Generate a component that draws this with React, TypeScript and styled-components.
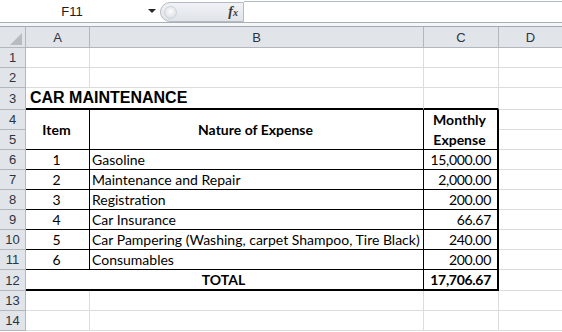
import React from 'react';
import styled, { createGlobalStyle } from 'styled-components';

const GlobalStyle = createGlobalStyle`
  html, body {
    margin: 0;
    padding: 0;
    background: #fff;
    overflow: hidden;
  }
  body {
    font-family: Lato, "Liberation Sans", sans-serif;
  }
`;

const EXPENSES = [
  { item: '1', name: 'Gasoline', amount: '15,000.00' },
  { item: '2', name: 'Maintenance and Repair', amount: '2,000.00' },
  { item: '3', name: 'Registration', amount: '200.00' },
  { item: '4', name: 'Car Insurance', amount: '66.67' },
  { item: '5', name: 'Car Pampering (Washing, carpet Shampoo, Tire Black)', amount: '240.00' },
  { item: '6', name: 'Consumables', amount: '200.00' },
];

const COLUMNS = ['A', 'B', 'C', 'D'];
const LAST_ROW = 14;

// --- formula bar ---
const FormulaBar = styled.div`
  display: flex;
  height: 23px;
  box-sizing: border-box;
  border-bottom: 1px solid #a9afb7;
  background: #fff;
`;

const NameBox = styled.div`
  width: 160px;
  display: flex;
  align-items: center;
`;

const NameText = styled.span`
  width: 144px;
  text-align: center;
  font-family: "Liberation Sans", sans-serif;
  font-size: 13px;
  color: #1c1c1c;
`;

const DropArrow = styled.span`
  width: 0;
  height: 0;
  margin-left: 4px;
  border-left: 4px solid transparent;
  border-right: 4px solid transparent;
  border-top: 4px solid #262626;
`;

const FxBox = styled.div`
  width: 84px;
  height: 20px;
  margin-top: 2px;
  box-sizing: border-box;
  display: flex;
  align-items: center;
  justify-content: space-between;
  padding: 0 5px 0 3px;
  background: linear-gradient(#f0f2f5, #e0e4e9);
  border: 1px solid #b4bac2;
  border-radius: 10px 0 0 10px;
`;

const Knob = styled.span`
  width: 11px;
  height: 11px;
  border-radius: 50%;
  background: radial-gradient(circle at 50% 40%, #fbfcfd, #d3d8de);
  border: 1px solid #cdd2d8;
`;

const FxLabel = styled.span`
  font-family: "Liberation Serif", serif;
  font-style: italic;
  font-weight: bold;
  font-size: 14px;
  color: #3a3a3a;

  small {
    font-size: 10px;
  }
`;

const FormulaInput = styled.div`
  flex: 1;
  margin-top: 1px;
  border-top: 1px solid #b3b9c0;
`;

const Strip = styled.div`
  height: 4px;
  box-sizing: border-box;
  background: #f5f6f8;
  border-bottom: 1px solid #a3a9b1;
`;

// --- worksheet grid ---
const Sheet = styled.div`
  display: grid;
  grid-template-columns: 26px 64px 334px 75px 64px;
  grid-template-rows: 21px 20px 20px 22px repeat(8, 20px) 21px 20px 20px;
  font-family: Lato, "Liberation Sans", sans-serif;
  font-size: 14px;
  color: #000;
`;

type Pos = { $r: number; $c: number; $rs?: number; $cs?: number };

const Cell = styled.div<Pos>`
  grid-row: ${(p) => p.$r} / span ${(p) => p.$rs ?? 1};
  grid-column: ${(p) => p.$c} / span ${(p) => p.$cs ?? 1};
  box-sizing: border-box;
  display: flex;
  align-items: center;
  min-width: 0;
  white-space: nowrap;
  overflow: hidden;
`;

const GridCell = styled(Cell)`
  border-right: 1px solid #dadcdd;
  border-bottom: 1px solid #dadcdd;
`;

const HeadCell = styled(Cell)`
  justify-content: center;
  background: #e1e4e9;
  border-right: 1px solid #b2b7be;
  border-bottom: 1px solid #b2b7be;
  font-family: "Liberation Sans", sans-serif;
  font-size: 13px;
  color: #2d3440;
`;

const Corner = styled(HeadCell)`
  align-items: flex-end;
  justify-content: flex-end;
  padding: 0 3px 2px 0;

  &::after {
    content: '';
    border-left: 12px solid transparent;
    border-bottom: 12px solid #b7bcc3;
  }
`;

const TitleCell = styled(Cell)`
  padding-left: 4px;
  padding-bottom: 1px;
  border-right: 1px solid #dadcdd;
  border-bottom: 2px solid #000;
  font-family: "Liberation Sans", sans-serif;
  font-weight: bold;
  font-size: 16px;
  overflow: visible;
`;

type TableProps = {
  $align?: 'left' | 'center' | 'right';
  $bold?: boolean;
  $thickRight?: boolean;
  $thickBottom?: boolean;
};

const TableCell = styled(Cell)<TableProps>`
  justify-content: ${(p) =>
    p.$align === 'right' ? 'flex-end' : p.$align === 'center' ? 'center' : 'flex-start'};
  padding: 0 ${(p) => (p.$align === 'right' ? '6px' : '2px')} 0 ${(p) => (p.$align === 'left' ? '2px' : '0')};
  border-right: ${(p) => (p.$thickRight ? 2 : 1)}px solid #000;
  border-bottom: ${(p) => (p.$thickBottom ? 2 : 1)}px solid #000;
  font-weight: ${(p) => (p.$bold ? 700 : 400)};
  letter-spacing: ${(p) => (p.$align === 'right' ? '-0.3px' : 'normal')};
`;

const WrapText = styled.span`
  text-align: center;
  line-height: 20px;
  white-space: normal;
  letter-spacing: normal;
`;

export default function App() {
  const cells: React.ReactNode[] = [];

  cells.push(<Corner key="corner" $r={1} $c={1} />);
  COLUMNS.forEach((col, i) => {
    cells.push(
      <HeadCell key={`h-${col}`} $r={1} $c={i + 2}>
        {col}
      </HeadCell>
    );
  });

  for (let row = 1; row <= LAST_ROW; row++) {
    const r = row + 1;
    cells.push(
      <HeadCell key={`rh-${row}`} $r={r} $c={1}>
        {row}
      </HeadCell>
    );
    if (row <= 2 || row >= 13) {
      [2, 3, 4].forEach((c) => cells.push(<GridCell key={`g-${row}-${c}`} $r={r} $c={c} />));
    }
    // column D is always blank
    cells.push(<GridCell key={`g-${row}-5`} $r={r} $c={5} />);
  }

  // title row
  cells.push(
    <TitleCell key="title" $r={4} $c={2} $cs={2}>
      CAR MAINTENANCE
    </TitleCell>
  );
  cells.push(<TitleCell key="title-c" $r={4} $c={4} />);

  // table header (rows 4-5 merged)
  cells.push(
    <TableCell key="th-item" $r={5} $c={2} $rs={2} $align="center" $bold>
      Item
    </TableCell>
  );
  cells.push(
    <TableCell key="th-name" $r={5} $c={3} $rs={2} $align="center" $bold>
      Nature of Expense
    </TableCell>
  );
  cells.push(
    <TableCell key="th-amount" $r={5} $c={4} $rs={2} $align="center" $bold $thickRight>
      <WrapText>
        Monthly
        <br />
        Expense
      </WrapText>
    </TableCell>
  );

  EXPENSES.forEach((e, i) => {
    const r = 7 + i;
    cells.push(
      <TableCell key={`i-${i}`} $r={r} $c={2} $align="center">
        {e.item}
      </TableCell>
    );
    cells.push(
      <TableCell key={`n-${i}`} $r={r} $c={3} $align="left">
        {e.name}
      </TableCell>
    );
    cells.push(
      <TableCell key={`a-${i}`} $r={r} $c={4} $align="right" $thickRight>
        {e.amount}
      </TableCell>
    );
  });

  cells.push(
    <TableCell key="total" $r={13} $c={2} $cs={2} $align="center" $bold $thickBottom>
      TOTAL
    </TableCell>
  );
  cells.push(
    <TableCell key="total-amount" $r={13} $c={4} $align="right" $bold $thickRight $thickBottom>
      17,706.67
    </TableCell>
  );

  return (
    <>
      <GlobalStyle />
      <FormulaBar>
        <NameBox>
          <NameText>F11</NameText>
          <DropArrow />
        </NameBox>
        <FxBox>
          <Knob />
          <FxLabel>
            f<small>x</small>
          </FxLabel>
        </FxBox>
        <FormulaInput />
      </FormulaBar>
      <Strip />
      <Sheet>{cells}</Sheet>
    </>
  );
}
